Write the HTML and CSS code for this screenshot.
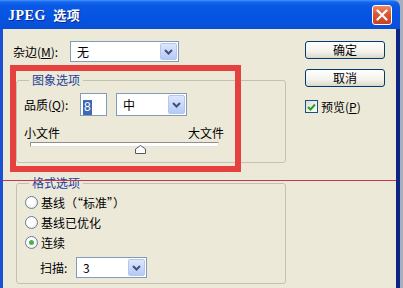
FILE: index.html
```html
<!DOCTYPE html>
<html lang="zh">
<head>
    <meta charset="UTF-8">
    <title>JPEG 选项</title>
    <link rel="stylesheet" href="styles.css">
</head>
<body>
    <div class="window">
        <div class="titlebar">
            <span class="title"><b class="latin">JPEG</b> 选项</span>
            <span class="close">
                <svg width="12" height="12" viewBox="0 0 12 12"><path d="M1.5 1.5L10.5 10.5M10.5 1.5L1.5 10.5" stroke="#fff" stroke-width="2.2" stroke-linecap="round"/></svg>
            </span>
        </div>
        <div class="body">
            <div class="main">
                <div class="row">
                    <label class="lbl lbl-matte">杂边(<u>M</u>):</label>
                    <div class="select sel-matte">
                        <span class="val">无</span>
                        <span class="drop"><svg width="9" height="6" viewBox="0 0 9 6"><path d="M1 1L4.5 4.5L8 1" fill="none" stroke="#3d5080" stroke-width="2"/></svg></span>
                    </div>
                </div>

                <fieldset class="group group-image">
                    <legend>图象选项</legend>
                    <div class="row row-quality">
                        <label class="lbl lbl-quality">品质(<u>Q</u>):</label>
                        <div class="num"><span class="hl">8</span></div>
                        <div class="select sel-quality">
                            <span class="val">中</span>
                            <span class="drop"><svg width="9" height="6" viewBox="0 0 9 6"><path d="M1 1L4.5 4.5L8 1" fill="none" stroke="#3d5080" stroke-width="2"/></svg></span>
                        </div>
                    </div>
                    <div class="scale"><span>小文件</span><span>大文件</span></div>
                    <div class="slider">
                        <div class="track"></div>
                        <svg class="thumb" width="11" height="9" viewBox="0 0 11 9"><path d="M0.5 8.5V4L5.5 0.5L10.5 4V8.5Z" fill="#fff" stroke="#5a5a5a"/></svg>
                    </div>
                </fieldset>

                <fieldset class="group group-format">
                    <legend>格式选项</legend>
                    <div class="radio-row"><span class="radio"></span>基线（“标准”）</div>
                    <div class="radio-row"><span class="radio"></span>基线已优化</div>
                    <div class="radio-row"><span class="radio on"></span>连续</div>
                    <div class="row row-scan">
                        <label class="lbl lbl-scan">扫描:</label>
                        <div class="select sel-scan">
                            <span class="val">3</span>
                            <span class="drop"><svg width="9" height="6" viewBox="0 0 9 6"><path d="M1 1L4.5 4.5L8 1" fill="none" stroke="#3d5080" stroke-width="2"/></svg></span>
                        </div>
                    </div>
                </fieldset>
            </div>

            <div class="side">
                <div class="btn">确定</div>
                <div class="btn btn-second">取消</div>
                <div class="check-row">
                    <span class="check"><svg width="9" height="8" viewBox="0 0 9 8"><path d="M1 4L3.5 6.5L8 1.5" fill="none" stroke="#21a121" stroke-width="2"/></svg></span>
                    预览(<u>P</u>)
                </div>
            </div>

            <!-- 标注: 红框和红线 -->
            <div class="mark-box"></div>
            <div class="mark-line"></div>
        </div>
    </div>
</body>
</html>
```

FILE: styles.css
```css
*{
    margin: 0px;
    padding: 0px;
    box-sizing: border-box;
}
html, body{
    width: 403px;
    height: 288px;
    overflow: hidden;
    background: #a9aebf;
}
body{
    font-family: "Noto Sans CJK SC", "DejaVu Sans", sans-serif;
    font-size: 12px;
    color: #000;
}
.window{
    width: 400px;
    height: 288px;
    display: flex;
    flex-direction: column;
}
.titlebar{
    height: 29px;
    flex: none;
    display: flex;
    align-items: center;
    justify-content: space-between;
    padding: 0 8px 0 8px;
    border-top-right-radius: 7px;
    background: linear-gradient(#4a94ff 0px, #1467ee 2px, #0a58e4 6px, #0553e2 60%, #0a4fd6 100%);
}
.title{
    color: #fff;
    font-weight: bold;
    font-size: 13px;
    letter-spacing: 0.5px;
    text-shadow: 1px 1px 0 #0b2a8c;
}
.title .latin{
    font-family: "Liberation Serif", "DejaVu Serif", serif;
    font-size: 14px;
    margin-right: 4px;
}
.close{
    width: 20px;
    height: 20px;
    display: flex;
    align-items: center;
    justify-content: center;
    border: 1px solid #fff;
    border-radius: 3px;
    background: linear-gradient(#ee8a66, #d9572f 45%, #c84326);
}
.body{
    position: relative;
    flex: 1;
    display: flex;
    padding: 12px 0 0 10px;
    background: #ece9d8;
    border-left: 3px solid #1b4fd4;
    border-right: 4px solid #0b2580;
    overflow: hidden;
}
.main{
    width: 273px;
    flex: none;
}
.row{
    display: flex;
    align-items: center;
}
.lbl{
    line-height: 14px;
}
.lbl-matte{ width: 57px; }
.lbl-quality{ width: 56px; }
.lbl-scan{ width: 36px; }

.select{
    height: 21px;
    display: flex;
    align-items: center;
    justify-content: space-between;
    background: #fff;
    border: 1px solid #7f9db9;
    padding: 1px 1px 1px 6px;
}
.select .drop{
    width: 17px;
    height: 100%;
    display: flex;
    align-items: center;
    justify-content: center;
    background: linear-gradient(#dde7fd, #b7c9f5);
    border: 1px solid #b5c6ee;
    border-radius: 2px;
}
.sel-matte{ width: 109px; }
.sel-quality{ width: 71px; height: 23px; margin-left: 9px; }
.sel-scan{ width: 71px; }

.num{
    width: 27px;
    height: 23px;
    background: #fff;
    border: 1px solid #7f9db9;
    padding: 3px 0 0 2px;
}
.num .hl{
    display: inline-block;
    height: 15px;
    line-height: 15px;
    padding: 0 1px;
    background: #3c68b4;
    color: #fff;
    font-family: "Liberation Sans", sans-serif;
    font-size: 12px;
}

.group{
    margin-left: 3px;
    width: 270px;
    border: 1px solid #c3c2b2;
    border-radius: 3px;
    padding: 6px 7px 7px 7px;
    min-inline-size: 0;
}
.group legend{
    margin-left: 5px;
    padding: 0 3px;
    line-height: 14px;
    color: #1e3f9a;
}
.group-image{
    margin-top: 11px;
}
.group-format{
    margin-top: 13px;
    padding: 2px 7px 5px 7px;
}
.scale{
    width: 200px;
    margin-top: 10px;
    line-height: 14px;
    display: flex;
    justify-content: space-between;
}
.slider{
    position: relative;
    width: 200px;
    height: 13px;
}
.track{
    margin: 2px 5px 0 6px;
    height: 5px;
    background: #fff;
    border: 1px solid #8f8e8a;
    border-bottom-color: #e2e1da;
    border-right-color: #e2e1da;
    border-radius: 1px;
}
.thumb{
    position: absolute;
    left: 111px;
    top: 3px;
}

.radio-row{
    height: 20px;
    display: flex;
    align-items: center;
    padding-left: 1px;
}
.radio{
    width: 13px;
    height: 13px;
    margin-right: 3px;
    border: 1px solid #6b7f9a;
    border-radius: 50%;
    background: radial-gradient(circle at 40% 40%, #fff 40%, #dcdcd4);
    display: flex;
    align-items: center;
    justify-content: center;
}
.radio.on::after{
    content: "";
    width: 5px;
    height: 5px;
    border-radius: 50%;
    background: #4fae4f;
}
.row-scan{
    margin-top: 5px;
    padding-left: 16px;
}

.side{
    margin-left: 19px;
    width: 80px;
}
.btn{
    height: 18px;
    line-height: 16px;
    text-align: center;
    border: 1px solid #003c74;
    border-radius: 3px;
    background: linear-gradient(#fff, #f3f2ec 60%, #dcd8c8);
}
.btn-second{
    margin-top: 10px;
}
.check-row{
    margin-top: 13px;
    height: 13px;
    display: flex;
    align-items: center;
    line-height: 13px;
}
.check{
    width: 13px;
    height: 13px;
    margin-right: 3px;
    border: 1px solid #1c5180;
    background: linear-gradient(135deg, #dcdcd7, #fff);
    display: flex;
    align-items: center;
    justify-content: center;
}

/* 标注层 */
.mark-box{
    position: absolute;
    left: 7px;
    top: 36px;
    width: 231px;
    height: 107px;
    border: 6px solid #e4413f;
}
.mark-line{
    position: absolute;
    left: -3px;
    top: 151px;
    width: 410px;
    height: 1px;
    background: #c8344a;
}
```
